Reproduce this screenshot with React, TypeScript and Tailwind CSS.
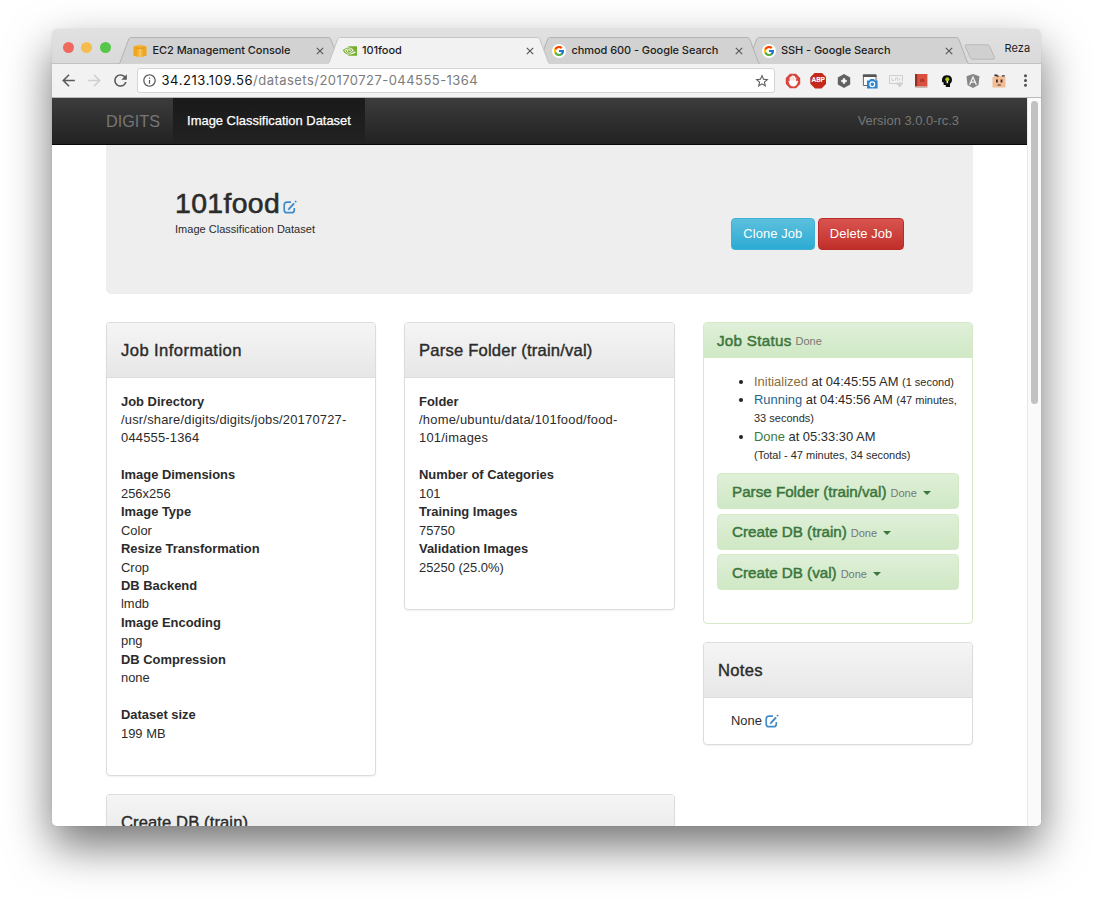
import React from "react";
import { FcGoogle } from "react-icons/fc";
import { SiNvidia } from "react-icons/si";
import { FaAngular } from "react-icons/fa";
import {
  MdArrowBack,
  MdArrowForward,
  MdRefresh,
  MdInfoOutline,
  MdStarBorder,
  MdMoreVert,
} from "react-icons/md";

const STATUS_HEAD = "text-[15.2px] leading-[20px] [-webkit-text-stroke:0.5px_currentColor]";

function EditIcon() {
  return (
    <svg viewBox="0 0 14 14" className="inline-block h-[14px] w-[14px] shrink-0" fill="none" stroke="#428bca">
      <path d="M8 2.2H4Q1.2 2.2 1.2 5V9.9Q1.2 12.7 4 12.7H8.5Q11.3 12.7 11.3 9.9V8" strokeWidth="1.7" />
      <path d="M6 8.9L11.1 3.3" strokeWidth="2" />
      <path d="M12.1 2.2L13.2 1" strokeWidth="1.8" />
      <path d="M5 10L5.5 8.3L6.8 9.5Z" fill="#428bca" strokeWidth="0.4" />
    </svg>
  );
}

function CubeIcon() {
  return (
    <svg viewBox="0 0 14 14" className="h-[14px] w-[14px]">
      <path d="M.5 2.6L4 1.4V12.8L.5 11.6ZM13.5 2.6L10 1.4V12.8L13.5 11.6Z" fill="#f0a61c" />
      <path d="M4 1.4L6.8.8V13.3L4 12.8ZM10 1.4L7.2.8V13.3L10 12.8Z" fill="#f7b32f" />
      <path d="M3.6 3.6H10.4V4.8H3.6Z" fill="#de9412" />
      <path d="M7 4.8V13" stroke="#fbe0a4" strokeWidth=".7" />
    </svg>
  );
}

function GoogleIcon() {
  return (
    <span className="flex h-[14px] w-[14px] items-center justify-center rounded-full bg-white">
      <FcGoogle size={12} />
    </span>
  );
}

type TabProps = {
  icon: React.ReactNode;
  title: string;
  active?: boolean;
  className: string;
};

function Tab({ icon, title, active, className }: TabProps) {
  return (
    <div className={`relative h-[27px] w-[223.5px] shrink-0 ${className}`}>
      <svg viewBox="0 0 223.5 27" className="absolute inset-0 h-full w-full">
        <path
          d="M0 27C1.5 26.6 2 25.8 2.6 24L10.4 3C11.2 1 11.8.5 13.6.5H209.9C211.7.5 212.3 1 213.1 3L220.9 24C221.5 25.8 222 26.6 223.5 27"
          fill={active ? "#f2f2f2" : "#d2d2d2"}
          stroke={active ? "#c4c4c4" : "#b2b2b2"}
          strokeWidth="1"
        />
      </svg>
      <div className="relative flex h-full items-center pr-[17px] pl-[15.5px]">
        {icon}
        <span className="ml-[5.5px] flex-1 font-[Inter,sans-serif] text-[11px] font-medium tracking-[-0.07px] whitespace-nowrap text-[#1d1d1d]">
          {title}
        </span>
        <svg viewBox="0 0 8 8" className="h-2 w-2" stroke="#5a5a5a" strokeWidth="1.2">
          <path d="M.8 .8L7.2 7.2M7.2 .8L.8 7.2" />
        </svg>
      </div>
    </div>
  );
}

function Extensions() {
  return (
    <div className="flex items-center gap-[9.8px]">
      <svg viewBox="0 0 16 16" className="h-4 w-4">
        <path d="M5 .8H11L15.2 5V11L11 15.2H5L.8 11V5Z" fill="#d8453c" />
        <path d="M3.2 7.6L4.6 8.4V4.2H5.8V3.2H7.2V2.6H8.6V3.2H10V4.4H11.2V8.6L12.6 7.6L13 8.8Q11.6 13.6 8.4 13.6Q5.4 13.6 4.4 11Z" fill="#fff" />
        <path d="M5.9 4.6V7.5M7.2 4V7.5M8.6 4V7.5M10 5V7.5" stroke="#e58b85" strokeWidth=".4" />
      </svg>
      <span className="flex h-4 w-4 items-center justify-center bg-[#c3281b] [clip-path:polygon(30%_0,70%_0,100%_30%,100%_70%,70%_100%,30%_100%,0_70%,0_30%)]">
        <span className="font-[Roboto,sans-serif] text-[7px] leading-none font-bold text-white">ABP</span>
      </span>
      <svg viewBox="0 0 16 16" className="h-4 w-4">
        <path d="M8 1L14.2 4.5V11.5L8 15L1.8 11.5V4.5Z" fill="#616161" />
        <path d="M8 5Q8.6 7.4 11 8Q8.6 8.6 8 11Q7.4 8.6 5 8Q7.4 7.4 8 5Z" fill="#fff" stroke="#fff" strokeWidth=".7" />
      </svg>
      <svg viewBox="0 0 16 16" className="h-4 w-4">
        <path d="M1.4 2H14V12.5H1.4Z" fill="#fafafa" stroke="#666" />
        <path d="M.9 1.4H14.5V4H.9Z" fill="#555" />
        <path d="M5 7.6H7.3L8.3 6H12L13 7.6H15.6V15.4H5Z" fill="#2f86cf" />
        <circle cx="10.3" cy="11.2" r="2.4" fill="none" stroke="#fff" strokeWidth="1.2" />
      </svg>
      <svg viewBox="0 0 16 16" className="h-4 w-4" fill="none" stroke="#cfcfcf">
        <path d="M9 10.5H1.5V2.5H14.5V8.5" />
        <path d="M4 5V7.6H6M7.5 7.6V5H9.5V7.6M11.5 5V7.6" />
        <path d="M8.5 10H15L11.7 14Z" fill="#cfcfcf" />
      </svg>
      <svg viewBox="0 0 16 16" className="h-4 w-4">
        <path d="M2 1H14.4V13.4H2Z" fill="#d9503f" />
        <path d="M2 1H4.2V14H2Z" fill="#8e3028" />
        <path d="M2.4 13H14.4V14.8H2.4Z" fill="#c9a49a" />
        <path d="M7 6.5L9.2 5.2L11.4 6.5V9H7Z" fill="#b03a2e" />
      </svg>
      <svg viewBox="0 0 16 16" className="h-4 w-4">
        <path d="M3 7Q3 2.5 8 2.3Q13 2.5 13 7Q13 9.5 11 11V14H6.8V12H4.6V9.6L3 9Z" fill="#0c0c0c" />
        <circle cx="8.3" cy="6.2" r="2" fill="#a9cf1a" />
        <path d="M7.5 8H9.1V10.2H7.5Z" fill="#ecf0a0" />
      </svg>
      <FaAngular size={16} color="#848688" />
      <svg viewBox="0 0 16 16" className="h-4 w-4">
        <path d="M1.5 4H3V2.8H13V4H14.5V14.5H1.5Z" fill="#f3bd93" />
        <path d="M3.4 1.6H6.4V2.6H7.6V3.8H5.4V3H3.4ZM11 2.2H13.8V3.6H11Z" fill="#30303c" />
        <path d="M5 6.5H6.8V9.6H5ZM9.6 6.5H11.4V9.6H9.6ZM6.6 11.6H9.8V12.6H6.6Z" fill="#3a2d2a" />
      </svg>
      <MdMoreVert size={19} color="#555" className="-ml-px" />
    </div>
  );
}

type CardProps = {
  title: string;
  titleClass: string;
  className: string;
  children?: React.ReactNode;
};

function Card({ title, titleClass, className, children }: CardProps) {
  return (
    <section
      className={`overflow-hidden rounded-[4px] border border-[#dcdcdc] bg-white shadow-[0_1px_2px_rgba(0,0,0,0.06)] ${className}`}
    >
      <header className="flex h-[55px] items-center border-b border-[#dcdcdc] bg-gradient-to-b from-[#f5f5f5] to-[#e7e7e7] px-[14px] pt-px">
        <h3 className={`text-[16.6px] leading-[20px] [-webkit-text-stroke:0.4px_currentColor] ${titleClass}`}>{title}</h3>
      </header>
      {children}
    </section>
  );
}

function Details({ rows, className }: { rows: [string, string][]; className?: string }) {
  return (
    <dl>
      {rows.map(([term, value]) => (
        <React.Fragment key={term}>
          <dt className="font-bold">{term}</dt>
          <dd className={className}>{value}</dd>
        </React.Fragment>
      ))}
    </dl>
  );
}

function Task({ name }: { name: string }) {
  return (
    <div className="mb-[4.6px] flex h-[36px] items-center rounded-[4px] border border-[#d6e9c6] bg-gradient-to-b from-[#dff0d8] to-[#cfe8c5] pt-px pl-[14px] text-[#3c763d]">
      <h4 className={STATUS_HEAD}>{name}</h4>
      <span className="mt-[2px] ml-[4px] text-[11px] text-[#777]">Done</span>
      <span className="mt-[2px] ml-[6px] border-x-[4px] border-t-[4px] border-x-transparent border-t-[#3c763d]" />
    </div>
  );
}

export default function App() {
  return (
    <div className="h-[900px] w-full overflow-hidden bg-white pt-[29px] pl-[52px]">
      <div className="flex h-[797px] w-[989px] flex-col rounded-[5px] shadow-[0_20px_45px_rgba(0,0,0,0.55),0_0_1px_rgba(0,0,0,0.25)]">
        <div className="flex min-h-0 flex-1 flex-col overflow-hidden rounded-[5px] bg-white">
          <div className="flex h-[35px] shrink-0 items-end border-b border-[#c2c2c2] bg-gradient-to-b from-[#e1e1e1] to-[#dadada]">
            <div className="flex gap-[7.5px] self-center pt-[2px] pl-[10.5px]">
              <span className="h-[11px] w-[11px] rounded-full bg-[#ee6a5f]" />
              <span className="h-[11px] w-[11px] rounded-full bg-[#f5bd4f]" />
              <span className="h-[11px] w-[11px] rounded-full bg-[#58c648]" />
            </div>
            <div className="-mb-px ml-[7px] flex">
              <Tab className="z-10" icon={<CubeIcon />} title="EC2 Management Console" />
              <Tab className="z-30 -ml-[14px]" active icon={<SiNvidia size={14} color="#76b02c" />} title="101food" />
              <Tab className="z-20 -ml-[14px]" icon={<GoogleIcon />} title="chmod 600 - Google Search" />
              <Tab className="z-10 -ml-[14px]" icon={<GoogleIcon />} title="SSH - Google Search" />
            </div>
            <svg viewBox="0 0 32 16" className="-ml-[6px] mb-[3px] h-4 w-8">
              <path d="M2 .8H23.5Q25 .8 25.6 2.2L30.4 13.4Q31 15.2 29 15.2H8.5Q7 15.2 6.4 13.8L1.2 2.6Q.6.8 2 .8Z" fill="#d0d0d0" stroke="#b8b8b8" />
            </svg>
            <span className="mb-[8px] ml-[9px] font-[Inter,sans-serif] text-[11px] leading-[14px] tracking-[0.1px] text-[#1d1d1d]">
              Reza
            </span>
          </div>

          <div className="flex h-[34px] shrink-0 items-center border-b border-[#b9b9b9] bg-[#f2f2f2] pl-[7px]">
            <MdArrowBack size={19} color="#5a5a5a" />
            <MdArrowForward size={19} color="#d0d0d0" className="ml-[7px]" />
            <MdRefresh size={19} color="#5a5a5a" className="ml-[7px]" />
            <div className="ml-[7px] flex h-[25px] w-[638px] items-center rounded-[3px] border border-[#d4d4d4] bg-white pr-[4px] pl-[4px]">
              <MdInfoOutline size={15} color="#5a5a5a" />
              <span className="ml-[4.5px] flex-1 font-[Inter,sans-serif] text-[13px] tracking-[0.46px] text-[#7b7b7b]">
                <span className="tracking-[0.58px] text-[#111]">34.213.109.56</span>/datasets/20170727-044555-1364
              </span>
              <MdStarBorder size={16} color="#5a5a5a" />
            </div>
            <div className="ml-[9.5px]">
              <Extensions />
            </div>
          </div>

          <div className="flex min-h-0 flex-1 font-['Liberation_Sans',Arial,sans-serif] text-[12.93px] leading-[18.45px] text-[#2b2b2b]">
            <div className="flex min-w-0 flex-1 flex-col overflow-hidden">
              <nav className="flex h-[47px] shrink-0 items-stretch border-b border-[#080808] bg-gradient-to-b from-[#3c3c3c] to-[#222] pr-[68px] pl-[54px] text-[#777]">
                <span className="flex w-[67px] items-center text-[16.2px]">DIGITS</span>
                <span className="flex w-[192px] items-center justify-center bg-gradient-to-b from-[#1a1a1a] to-[#222] pt-px text-white [-webkit-text-stroke:0.25px_currentColor]">
                  Image Classification Dataset
                </span>
                <span className="ml-auto flex items-center pt-px">Version 3.0.0-rc.3</span>
              </nav>

              <main className="flex flex-col px-[54px]">
                <div className="flex h-[148.5px] w-[867px] shrink-0 justify-between rounded-b-[5px] bg-[#eee] pr-[69px] pl-[69px]">
                  <div className="pt-[42px]">
                    <h1 className="flex h-[33px] items-center text-[28.4px] leading-[33px] [-webkit-text-stroke:0.6px_currentColor]">
                      <span className="tracking-[0.35px]">101food</span>
                      <span className="mt-[7px] ml-[3px] flex">
                        <EditIcon />
                      </span>
                    </h1>
                    <p className="pt-px text-[11px] leading-[16px] tracking-[0.02px]">Image Classification Dataset</p>
                  </div>
                  <div className="flex items-start gap-[3.5px] pt-[73px] text-white">
                    <button className="h-[32px] w-[83.5px] rounded-[4px] border border-[#3fb0d3] bg-gradient-to-b from-[#5bc0de] to-[#2aabd2] pt-px tracking-[0.08px]">
                      Clone Job
                    </button>
                    <button className="h-[32px] w-[86px] rounded-[4px] border border-[#b92c28] bg-gradient-to-b from-[#d9534f] to-[#c12e2a] pt-px tracking-[0.05px]">
                      Delete Job
                    </button>
                  </div>
                </div>

                <div className="mt-[28.5px] flex w-[867px] gap-[28px]">
                  <div className="flex w-[569px] flex-col gap-[18.5px]">
                    <div className="flex items-start justify-between">
                      <Card title="Job Information" titleClass="tracking-[0.43px]" className="h-[453.5px] w-[270px]">
                        <div className="flex flex-col gap-[18.45px] px-[14px] pt-[14.5px]">
                          <Details
                            className="tracking-[0.2px]"
                            rows={[["Job Directory", "/usr/share/digits/digits/jobs/20170727-044555-1364"]]}
                          />
                          <Details
                            rows={[
                              ["Image Dimensions", "256x256"],
                              ["Image Type", "Color"],
                              ["Resize Transformation", "Crop"],
                              ["DB Backend", "lmdb"],
                              ["Image Encoding", "png"],
                              ["DB Compression", "none"],
                            ]}
                          />
                          <Details rows={[["Dataset size", "199 MB"]]} />
                        </div>
                      </Card>
                      <Card title="Parse Folder (train/val)" titleClass="tracking-[0.2px]" className="h-[287.5px] w-[271px]">
                        <div className="flex flex-col gap-[18.45px] pt-[14.5px] pr-[40px] pl-[14px]">
                          <Details
                            className="tracking-[0.24px]"
                            rows={[["Folder", "/home/ubuntu/data/101food/food-101/images"]]}
                          />
                          <Details
                            rows={[
                              ["Number of Categories", "101"],
                              ["Training Images", "75750"],
                              ["Validation Images", "25250 (25.0%)"],
                            ]}
                          />
                        </div>
                      </Card>
                    </div>
                    <Card title="Create DB (train)" titleClass="tracking-[0.1px]" className="h-[120px]" />
                  </div>

                  <div className="flex w-[270px] flex-col gap-[18.5px]">
                    <section className="h-[301.5px] overflow-hidden rounded-[4px] border border-[#d6e9c6] bg-white">
                      <header className="flex h-[35px] items-center border-b border-[#d6e9c6] bg-gradient-to-b from-[#dff0d8] to-[#d0e9c6] px-[13px] pt-px text-[#3c763d]">
                        <h3 className={`tracking-[0.28px] ${STATUS_HEAD}`}>Job Status</h3>
                        <span className="mt-[2px] ml-[4px] text-[11px] text-[#777]">Done</span>
                      </header>
                      <div className="px-[13px] pt-[14.5px]">
                        <ul className="mb-[8.5px] list-disc pl-[37px] marker:text-[#222]">
                          <li className="whitespace-nowrap">
                            <span className="text-[#8a6d3b]">Initialized</span> at 04:45:55 AM{" "}
                            <small className="text-[11px]">(1 second)</small>
                          </li>
                          <li className="whitespace-nowrap">
                            <span className="text-[#24648f]">Running</span> at 04:45:56 AM{" "}
                            <small className="text-[11px]">
                              (47 minutes,
                              <br />
                              33 seconds)
                            </small>
                          </li>
                          <li className="whitespace-nowrap">
                            <span className="text-[#3c763d]">Done</span> at 05:33:30 AM
                            <br />
                            <small className="text-[11px]">(Total - 47 minutes, 34 seconds)</small>
                          </li>
                        </ul>
                        <Task name="Parse Folder (train/val)" />
                        <Task name="Create DB (train)" />
                        <Task name="Create DB (val)" />
                      </div>
                    </section>
                    <Card title="Notes" titleClass="tracking-[0.3px]" className="h-[103px]">
                      <div className="flex items-center pt-[14px] pl-[27px]">
                        <span>None</span>
                        <span className="ml-[3px] flex">
                          <EditIcon />
                        </span>
                      </div>
                    </Card>
                  </div>
                </div>
              </main>
            </div>
            <div className="flex w-[14px] shrink-0 justify-center border-l border-[#e8e8e8] bg-[#fafafa] pt-[3px]">
              <div className="h-[303px] w-[7px] rounded-full bg-[#c1c1c1]" />
            </div>
          </div>
        </div>
      </div>
    </div>
  );
}
